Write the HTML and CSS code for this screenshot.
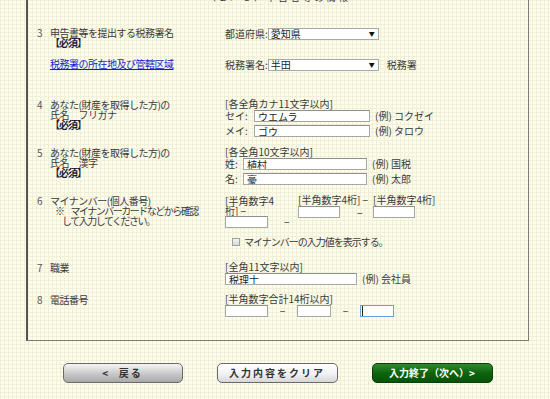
FILE: index.html
```html
<!DOCTYPE html>
<html lang="ja">
<head>
	<meta charset="utf-8">
	<title>申告者情報の入力</title>
	<link rel="stylesheet" href="styles.css">
</head>
<body>
	<div class="panel">
		<div class="panel-title">（２／３）申告者等の情報</div>

		<div class="row row-3a">
			<div class="num">3</div>
			<div class="label">申告書等を提出する税務署名<br><span class="req">【必須】</span></div>
			<div class="field line">
				<span class="flabel">都道府県:</span>
				<span class="select"><select><option>愛知県</option></select></span>
			</div>
		</div>

		<div class="row row-3b">
			<div class="num"></div>
			<div class="label"><a href="#">税務署の所在地及び管轄区域</a></div>
			<div class="field line">
				<span class="flabel">税務署名:</span>
				<span class="select"><select><option>半田</option></select></span>
				<span class="after">税務署</span>
			</div>
		</div>

		<div class="row row-4">
			<div class="num">4</div>
			<div class="label">あなた(財産を取得した方)の<br>氏名　フリガナ<br><span class="req">【必須】</span></div>
			<div class="field">
				<div class="hint">[各全角カナ11文字以内]</div>
				<div class="line">
					<span class="flabel kana">セイ:</span>
					<input class="text w116" type="text" value="ウエムラ">
					<span class="example">(例) コクゼイ</span>
				</div>
				<div class="line gap">
					<span class="flabel kana">メイ:</span>
					<input class="text w116" type="text" value="ゴウ">
					<span class="example">(例) タロウ</span>
				</div>
			</div>
		</div>

		<div class="row row-5">
			<div class="num">5</div>
			<div class="label">あなた(財産を取得した方)の<br>氏名　漢字<br><span class="req">【必須】</span></div>
			<div class="field">
				<div class="hint">[各全角10文字以内]</div>
				<div class="line">
					<span class="flabel kanji">姓:</span>
					<input class="text w124" type="text" value="植村">
					<span class="example">(例) 国税</span>
				</div>
				<div class="line gap">
					<span class="flabel kanji">名:</span>
					<input class="text w124" type="text" value="豪">
					<span class="example">(例) 太郎</span>
				</div>
			</div>
		</div>

		<div class="row row-6">
			<div class="num">6</div>
			<div class="label">マイナンバー(個人番号)
				<div class="note"><span class="mark">※</span>マイナンバーカードなどから確認<br>して入力してください。</div>
			</div>
			<div class="field">
				<div class="mynumber">
					<div class="mn-col first">
						<div class="hint two">[半角数字4<br>桁] −</div>
						<div class="line">
							<input class="text w43" type="text">
							<span class="dash">−</span>
						</div>
					</div>
					<div class="mn-col">
						<div class="hint">[半角数字4桁] −</div>
						<div class="line">
							<input class="text w42" type="text">
							<span class="dash">−</span>
						</div>
					</div>
					<div class="mn-col">
						<div class="hint">[半角数字4桁]</div>
						<div class="line">
							<input class="text w42" type="text">
						</div>
					</div>
				</div>
				<label class="check"><input type="checkbox"><span>マイナンバーの入力値を表示する。</span></label>
			</div>
		</div>

		<div class="row row-7">
			<div class="num">7</div>
			<div class="label">職業</div>
			<div class="field">
				<div class="hint">[全角11文字以内]</div>
				<div class="line">
					<input class="text w132" type="text" value="税理士">
					<span class="example">(例) 会社員</span>
				</div>
			</div>
		</div>

		<div class="row row-8">
			<div class="num">8</div>
			<div class="label">電話番号</div>
			<div class="field">
				<div class="hint">[半角数字合計14桁以内]</div>
				<div class="line">
					<input class="text w43" type="text">
					<span class="tel-dash">−</span>
					<input class="text w34" type="text">
					<span class="tel-dash">−</span>
					<input class="text w34 focus" type="text">
				</div>
			</div>
		</div>
	</div>

	<div class="buttons">
		<button class="btn back">&lt;&nbsp;&nbsp;戻る</button>
		<button class="btn clear">入力内容をクリア</button>
		<button class="btn next">入力終了（次へ）&gt;</button>
	</div>
</body>
</html>
```

FILE: styles.css
```css
html {
	height: 100%;
}

body {
	margin: 0;
	height: 399px;
	overflow: hidden;
	font-family: "Noto Sans CJK JP", "Noto Sans", sans-serif;
	font-size: 10px;
	line-height: 10px;
	color: #3a3a3a;
	background-color: #fdfdea;
	background-image:
		linear-gradient(#f0f0da 1px, transparent 1px),
		linear-gradient(90deg, #f0f0da 1px, transparent 1px);
	background-size: 4px 4px;
}

.panel {
	margin: -20px 0 0 26px;
	width: 500px;
	border: 1px solid #7a7a7a;
	border-left: 2px solid #555;
}

.panel-title {
	padding: 11px 0 26px;
	height: 10px;
	text-align: center;
	letter-spacing: 2px;
}

.row {
	display: grid;
	grid-template-columns: 13px 175px 1fr;
	padding-left: 9px;
	align-items: start;
}

.row-3a { height: 31px; }
.row-3b { height: 41px; }
.row-4 { height: 48px; }
.row-5 { height: 48px; }
.row-6 { height: 67px; }
.row-7 { height: 32px; }
.row-8 { height: 45px; }

.num {
	color: #555;
}

.label {
	letter-spacing: -0.5px;
}

.req {
	font-weight: bold;
	color: #1d1d40;
	letter-spacing: -1px;
}

a {
	color: #1a1acc;
	text-decoration: underline;
}

.line {
	display: flex;
	align-items: center;
	white-space: nowrap;
}

.line.gap {
	margin-top: 3px;
}

.hint {
	height: 10px;
	line-height: 8px;
	white-space: nowrap;
}

.hint.two {
	height: 20px;
	line-height: 10px;
}

.flabel {
	display: inline-block;
	white-space: nowrap;
}

.flabel.kana {
	width: 29px;
}

.flabel.kanji {
	width: 18px;
}

.select {
	position: relative;
	display: inline-block;
}

.select select {
	appearance: none;
	width: 111px;
	height: 12px;
	margin: 0;
	padding: 0 0 0 2px;
	border: 1px solid #a9a9a9;
	border-radius: 0;
	background: #fff;
	font-family: inherit;
	font-size: 10px;
	line-height: 10px;
	color: #222;
}

.select::after {
	content: "▼";
	position: absolute;
	right: 4px;
	top: 3px;
	font-size: 6px;
	line-height: 6px;
	color: #111;
}

.after {
	margin-left: 8px;
}

input.text {
	box-sizing: border-box;
	height: 12px;
	margin: 0;
	padding: 0 3px;
	border: 1px solid #a7a7a7;
	border-top-color: #8e8e8e;
	background: #fff;
	font-family: inherit;
	font-size: 10px;
	line-height: 10px;
	color: #222;
	outline: none;
}

input.focus {
	border: 1px solid #6a9fe0;
	box-shadow: inset 1px 0 0 #fff, inset 2px 0 0 #222;
}

.w116 { width: 116px; }
.w124 { width: 124px; }
.w132 { width: 132px; }
.w43 { width: 43px; }
.w42 { width: 42px; }
.w34 { width: 34px; }

.example {
	margin-left: 5px;
}

.note {
	padding-left: 12px;
	text-indent: -7px;
	letter-spacing: -1.5px;
}

.note .mark {
	margin-right: 7px;
}

.mynumber {
	display: flex;
	align-items: flex-start;
}

.mn-col {
	width: 75px;
}

.mn-col.first {
	width: 73px;
}

.dash {
	margin-left: 16px;
}

.mn-col:nth-child(2) .dash {
	margin-left: 17px;
	margin-top: 2px;
}

.check {
	display: flex;
	align-items: center;
	margin: 9px 0 0 7px;
	letter-spacing: -1px;
}

.check input {
	appearance: none;
	box-sizing: border-box;
	width: 8px;
	height: 8px;
	margin: 0 4px 0 0;
	border: 1px solid #a0a0a0;
	background: linear-gradient(#f4f4f4, #d8d8d8);
}

.tel-dash {
	width: 29px;
	text-align: center;
}

.buttons {
	display: flex;
	justify-content: center;
	gap: 34px;
	margin: 22px 0 0 26px;
	width: 503px;
}

.btn {
	box-sizing: border-box;
	width: 121px;
	height: 20px;
	padding: 0;
	border-radius: 5px;
	font-family: inherit;
	font-size: 10px;
	font-weight: bold;
	line-height: 10px;
}

.btn.back {
	width: 120px;
	border: 1px solid #6a6a6a;
	background: linear-gradient(#f6f6f6, #c8c8c8 55%, #a9a9a9);
	color: #333;
	letter-spacing: 2px;
}

.btn.clear {
	border: 1px solid #6a6a6a;
	background: linear-gradient(#ffffff, #f2f2f2 55%, #d6d6d6);
	color: #333;
	letter-spacing: 2px;
}

.btn.next {
	border: 1px solid #0c3d0c;
	background: linear-gradient(#2f8a2f, #0d640d 50%, #075207);
	color: #fff;
}
```
